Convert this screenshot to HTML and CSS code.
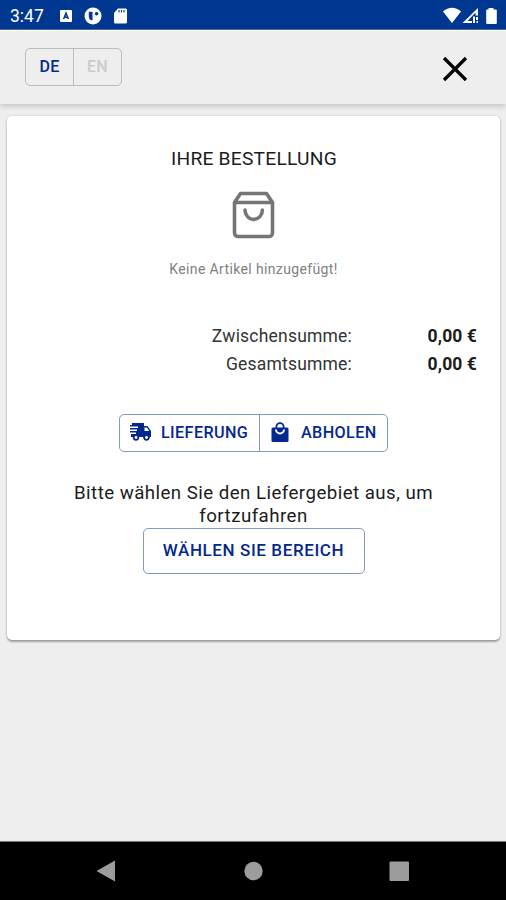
FILE: index.html
```html
<!DOCTYPE html>
<html lang="de">
<head>
<meta charset="utf-8">
<title>Ihre Bestellung</title>
<link rel="stylesheet" href="styles.css">
</head>
<body>
<div class="screen">
  <div class="status">
    <span class="clock">3:47</span>
    <svg class="status-left" width="72" height="18" viewBox="0 0 72 18">
      <rect x="1" y="3" width="12" height="12" rx="1" fill="#fff"/>
      <path d="M4.6 12 7 6l2.400 6M5.400 10.200h3.200" fill="none" stroke="#003791" stroke-width="1.500"/>
      <circle cx="34" cy="9" r="8.500" fill="#fff"/>
      <path d="M29.800 4.800h3.700v8.400h-1.600q-2.100-1-2.100-4z" fill="#003791"/>
      <circle cx="37.600" cy="6.800" r="1.800" fill="#003791"/>
      <path d="M59 1.500h7.500a1.500 1.500 0 0 1 1.500 1.500v12a1.500 1.500 0 0 1-1.500 1.500h-10A1.500 1.500 0 0 1 55 15V6z" fill="#fff"/>
      <path d="M60 3v2.500M62.500 3v2.500M65 3v2.500" stroke="#003791" stroke-width="1.100"/>
    </svg>
    <svg class="status-right" width="56" height="18" viewBox="0 0 56 18">
      <path d="M1 4.500Q10-3 19 4.500L10 16z" fill="#fff"/>
      <path d="M36 1v7.500h-2.500V5.500L25.500 14H30v2H20.500zM31 9.500h2v6.500h-2zM34 10h2v3h-2zM34.500 14h1.500v2h-1.500z" fill="#fff"/>
      <path d="M46.500 1h5v1.500H54a.8.8 0 0 1 .8.8V16a1 1 0 0 1-1 1h-8.600a1 1 0 0 1-1-1V3.300a.8.8 0 0 1 .8-.8h1.500z" fill="#fff"/>
    </svg>
  </div>
  <header class="bar">
    <div class="langs">
      <button class="lang on">DE</button>
      <button class="lang">EN</button>
    </div>
    <svg class="close" width="26" height="26" viewBox="0 0 26 26">
      <path d="M2 2 24 24M24 2 2 24" stroke="#000" stroke-width="3.200"/>
    </svg>
  </header>
  <main class="card">
    <h1>IHRE BESTELLUNG</h1>
    <svg class="bag" width="44" height="48" viewBox="0 0 44 48" fill="none" stroke="#757575" stroke-width="3.600" stroke-linejoin="round" stroke-linecap="round">
      <path d="M2.500 11.500 8.500 2.500h26l6 9V42a3.500 3.500 0 0 1-3.500 3.500H6A3.500 3.500 0 0 1 2.500 42zM4 11.500h35"/>
      <path d="M13 19a8.700 9.400 0 0 0 17.400 0"/>
    </svg>
    <p class="empty"><span>Keine Artikel hinzugefügt!</span></p>
    <div class="totals">
      <span class="label">Zwischensumme:</span><b>0,00 €</b>
      <span class="label">Gesamtsumme:</span><b>0,00 €</b>
    </div>
    <div class="modes">
      <button class="mode">
        <svg width="23" height="20" viewBox="0 0 23 20">
          <path d="M3 1h12v3h3.500L22 9v6h-1.500a3 3 0 0 1-6 0H10a3 3 0 0 1-6 0H2v-3h5v-1.500H1V9h7V7.500H1V6h8V4.500H1V3h2z" fill="#04288f"/>
          <path d="M15.500 5.500H18l2.200 3.500h-4.700z" fill="#fff"/>
          <circle cx="7" cy="15.500" r="2.300" fill="#fff" stroke="#04288f" stroke-width="1.700"/>
          <circle cx="17.500" cy="15.500" r="2.300" fill="#fff" stroke="#04288f" stroke-width="1.700"/>
        </svg>
        <span>LIEFERUNG</span>
      </button>
      <button class="mode pickup">
        <svg width="18" height="21" viewBox="0 0 18 21">
          <rect x=".5" y="5.500" width="17" height="14.500" rx="1.500" fill="#04288f"/>
          <path d="M5.400 6V4.800a3.600 3.600 0 0 1 7.200 0V6" fill="none" stroke="#04288f" stroke-width="1.800"/>
          <path d="M5 7.500a4 4 0 0 0 8 0" fill="none" stroke="#fff" stroke-width="1.900"/>
        </svg>
        <span>ABHOLEN</span>
      </button>
    </div>
    <p class="hint">Bitte wählen Sie den Liefergebiet aus, um fortzufahren</p>
    <button class="area">WÄHLEN SIE BEREICH</button>
  </main>
  <nav class="nav">
    <svg width="506" height="57" viewBox="0 0 506 57" fill="#9c9c9c">
      <path d="M96.500 29 115 18.500v21z"/>
      <circle cx="253.500" cy="29" r="9.200"/>
      <rect x="389.500" y="19.500" width="19.500" height="19.500" rx="1"/>
    </svg>
  </nav>
</div>
</body>
</html>
```
FILE: styles.css
```css
* { box-sizing: border-box; }
body { margin: 0; font-family: Roboto, sans-serif; color: #1c1c1c; }
button { font-family: inherit; background: none; border: 0; padding: 0; margin: 0; color: #04288f; font-weight: 500; }
svg { display: block; flex: none; }
h1, p { margin: 0; font-weight: 400; }

.screen { width: 506px; height: 900px; display: flex; flex-direction: column; background: #eee; overflow: hidden; }

.status { height: 30px; flex: none; background: #003791; border-bottom: 1px solid #4a6ca8; display: flex; align-items: center; padding: 2px 8px 0 10px; }
.clock { color: #fff; font-size: 17.5px; width: 49px; }
.status-right { margin-left: auto; }

.bar { height: 74px; flex: none; border-top: 1px solid #fff; background: #eee; box-shadow: 0 2px 6px rgba(0, 0, 0, .2); display: flex; align-items: center; justify-content: space-between; padding: 1px 38px 0 25px; }
.langs { display: flex; width: 97px; height: 38px; border: 1px solid #bdbdbd; border-radius: 5px; margin-top: -2px; }
.lang { flex: 1; font-size: 16px; letter-spacing: .2px; color: #ccc; padding-bottom: 2px; }
.lang.on { color: #04288f; border-right: 1px solid #bdbdbd; }
.close { margin-top: 2px; }

.card { width: 493px; height: 524px; flex: none; margin: 12px 0 0 7px; padding-top: 31px; background: #fff; border-radius: 5px; box-shadow: 0 2px 2px rgba(0, 0, 0, .3), 0 0 3px rgba(0, 0, 0, .14); display: flex; flex-direction: column; align-items: center; }
h1 { font-size: 19.2px; line-height: 24px; letter-spacing: .24px; margin-left: 1px; }
.bag { margin-top: 20px; }
.empty { margin-top: 20px; font-size: 14px; line-height: 20px; color: #808080; letter-spacing: .36px; }

.totals { align-self: stretch; margin-top: 43px; padding-right: 23px; display: grid; grid-template-columns: 345px 1fr; line-height: 28px; font-size: 17.5px; text-align: right; }
.label { letter-spacing: .2px; color: #333; }
.totals b { font-weight: 700; letter-spacing: .1px; }

.modes { margin-top: 36px; display: flex; width: 269px; height: 38px; border: 1px solid #8698c8; border-radius: 5px; }
.mode { display: flex; align-items: center; width: 140px; padding: 0 0 2px 9px; border-right: 1px solid #8698c8; font-size: 16.2px; letter-spacing: .38px; }
.mode span { margin-left: 9px; }
.mode.pickup { width: 127px; border-right: 0; padding-left: 11px; }
.mode.pickup span { margin-left: 12px; }

.hint { width: 380px; margin-top: 30px; font-size: 18.7px; line-height: 23px; letter-spacing: .45px; text-align: center; }
.area { width: 222px; height: 46px; border: 1px solid #8698c8; border-radius: 5px; font-size: 17px; letter-spacing: .6px; padding-bottom: 2px; }

.nav { height: 59px; margin-top: auto; flex: none; background: #000; border-top: 1px solid #777; }
```
